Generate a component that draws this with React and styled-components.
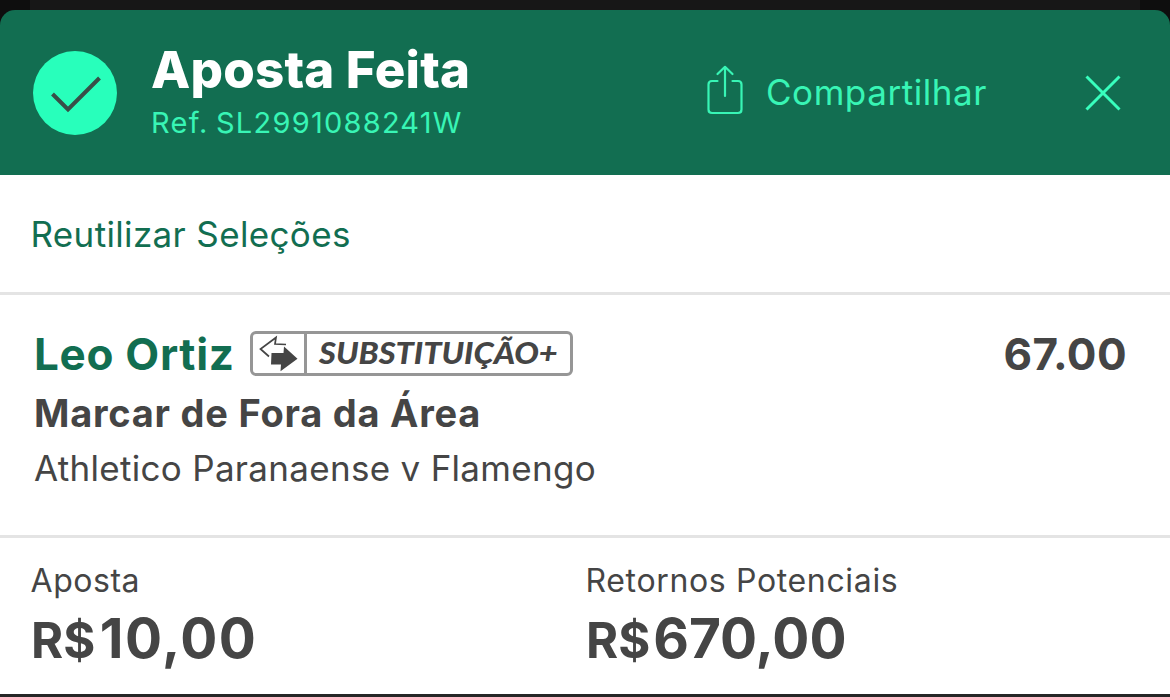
import React from "react";
import styled, { createGlobalStyle } from "styled-components";

const Global = createGlobalStyle`
  * { box-sizing: border-box; }
  body { margin: 0; background: #0d0d0d; font-family: Inter, "Liberation Sans", sans-serif; color: #454545; }
`;
const Page = styled.main`
  width: 1170px; height: 697px; overflow: hidden;
  background: #0e0e0e;
  display: flex; flex-direction: column;
`;
const Backdrop = styled.div`height: 10px; margin: 0 30px; background: #171717; flex: none;`;
const Slip = styled.section`background: #0e0e0e; flex: none;`;
const Header = styled.header`
  height: 165px; padding: 0 49px 0 33px; background: #126e51;
  border-radius: 15px 15px 0 0; display: flex; align-items: flex-start;
`;
const Tick = styled.div`
  width: 84px; height: 84px; margin-top: 41px; border-radius: 50%; background: #28ffbb; flex: none;
  svg { display: block; }
`;
const Titles = styled.div`margin: 32px 0 0 34px; flex: 1;`;
const Line = styled.div`
  font-size: ${p => p.$size}px; line-height: ${p => p.$lh}px; font-weight: ${p => p.$weight || 400};
  letter-spacing: ${p => p.$track || 0}px; color: ${p => p.$color || "#454545"};
  white-space: nowrap;
`;
const Reference = styled(Line)`word-spacing: -2px;`;
const Share = styled.button`
  border: 0; padding: 0; background: none; font-family: inherit;
  display: flex; align-items: flex-start; margin-top: 55px; width: 281px; height: 52px;
  svg { flex: none; margin-right: 21px; }
`;
const ShareLabel = styled(Line)`margin-top: 7px;`;
const Close = styled.button`
  border: 0; padding: 0; background: none; margin: 65px 0 0 97px; height: 36px; width: 36px;
  svg { display: block; }
`;
const Reuse = styled.div`
  background: #fff; height: 120px; padding: 39px 30.5px 0; border-bottom: 3px solid #e4e4e4;
`;
const Selection = styled.div`
  background: #fff; height: 243px; padding: 34px 43px 0 34px; border-bottom: 3px solid #e4e4e4;
`;
const NameRow = styled.div`display: flex; align-items: flex-start; height: 54px;`;
const Name = styled(Line)`width: 216px;`;
const Odds = styled(Line)`margin-left: auto;`;
const Badge = styled.div`
  display: flex; margin-top: 2px; width: 323px; height: 45px;
  border: 3px solid #969696; border-radius: 6px;
`;
const BadgeIcon = styled.div`width: 54px; border-right: 3px solid #969696; svg { display: block; }`;
const BadgeText = styled.div`
  font: italic 900 30px/37px Lato, sans-serif;
  margin-left: 12px; white-space: nowrap; transform: scaleX(1.085); transform-origin: left;
`;
const Totals = styled.div`
  background: #fff; height: 156px; padding: 24px 30.5px 0; display: grid; grid-template-columns: 555px 1fr;
`;
const Amount = styled(Line)`
  margin: 8px 0 0 0.5px;
  small { font-size: 49px; letter-spacing: 0; margin-right: ${p => p.$gap}px; }
`;
const Footer = styled.div`height: 3px; background: #262626;`;

export default function App() {
  return (
    <Page>
      <Global />
      <Backdrop />
      <Slip>
        <Header>
          <Tick>
            <svg width="84" height="84" viewBox="0 0 84 84" fill="none" stroke="#384f48" strokeWidth="4">
              <path d="M19.5 43 L35 58.5 L66.5 27" />
            </svg>
          </Tick>
          <Titles>
            <Line $size={51} $lh={56} $weight={800} $track={0.2} $color="#fff">Aposta Feita</Line>
            <Reference $size={29} $lh={49} $track={1.25} $color="#38f5b5">Ref. SL2991088241W</Reference>
          </Titles>
          <Share>
            <svg width="38" height="52" viewBox="0 0 38 52" fill="none" stroke="#38f5b5" strokeWidth="2.2" strokeLinecap="round" strokeLinejoin="round">
              <path d="M10.5 16 H5 Q1.5 16 1.5 19.5 V44.5 Q1.5 48 5 48 H31 Q34.5 48 34.5 44.5 V19.5 Q34.5 16 31 16 H25.5" />
              <path d="M18 31 V2.5 M10.5 9 L18 1.8 L25.5 9" />
            </svg>
            <ShareLabel $size={35} $lh={40} $track={0.55} $color="#38f5b5">Compartilhar</ShareLabel>
          </Share>
          <Close aria-label="Fechar">
            <svg width="36" height="36" viewBox="0 0 36 36" fill="none" stroke="#38ffbd" strokeWidth="3">
              <path d="M1.5 1.5 L34.5 34.5 M34.5 1.5 L1.5 34.5" />
            </svg>
          </Close>
        </Header>
        <Reuse><Line $size={35} $lh={41} $track={0.35} $color="#126e51">Reutilizar Seleções</Line></Reuse>
        <Selection>
          <NameRow>
            <Name $size={44} $lh={51} $weight={700} $track={0.7} $color="#126e51">Leo Ortiz</Name>
            <Badge>
              <BadgeIcon>
                <svg width="51" height="39" viewBox="0 0 51 39">
                  <path d="M16 22.5 L7.5 15 L23 3.5 L22 10 L33 10.5" fill="none" stroke="#454545" strokeWidth="1.7" />
                  <path d="M18.5 19 H30.5 L31 12.5 L44.5 24.8 L27.5 37.3 L28 30.5 H18 Z" fill="#454545" />
                </svg>
              </BadgeIcon>
              <BadgeText>SUBSTITUIÇÃO+</BadgeText>
            </Badge>
            <Odds $size={44} $lh={51} $weight={700} $track={0.4}>67.00</Odds>
          </NameRow>
          <Line $size={38} $lh={60} $weight={700} $track={0.76}>Marcar de Fora da Área</Line>
          <Line $size={35} $lh={51} $track={0.3}>Athletico Paranaense v Flamengo</Line>
        </Selection>
        <Totals>
          <div>
            <Line $size={32} $lh={38} $track={0.55}>Aposta</Line>
            <Amount $size={55} $lh={60} $weight={700} $track={1.5} $gap={4.5}><small>R$</small>10,00</Amount>
          </div>
          <div>
            <Line $size={32} $lh={38} $track={0.65}>Retornos Potenciais</Line>
            <Amount $size={55} $lh={60} $weight={700} $gap={3}><small>R$</small>670,00</Amount>
          </div>
        </Totals>
        <Footer />
      </Slip>
    </Page>
  );
}
